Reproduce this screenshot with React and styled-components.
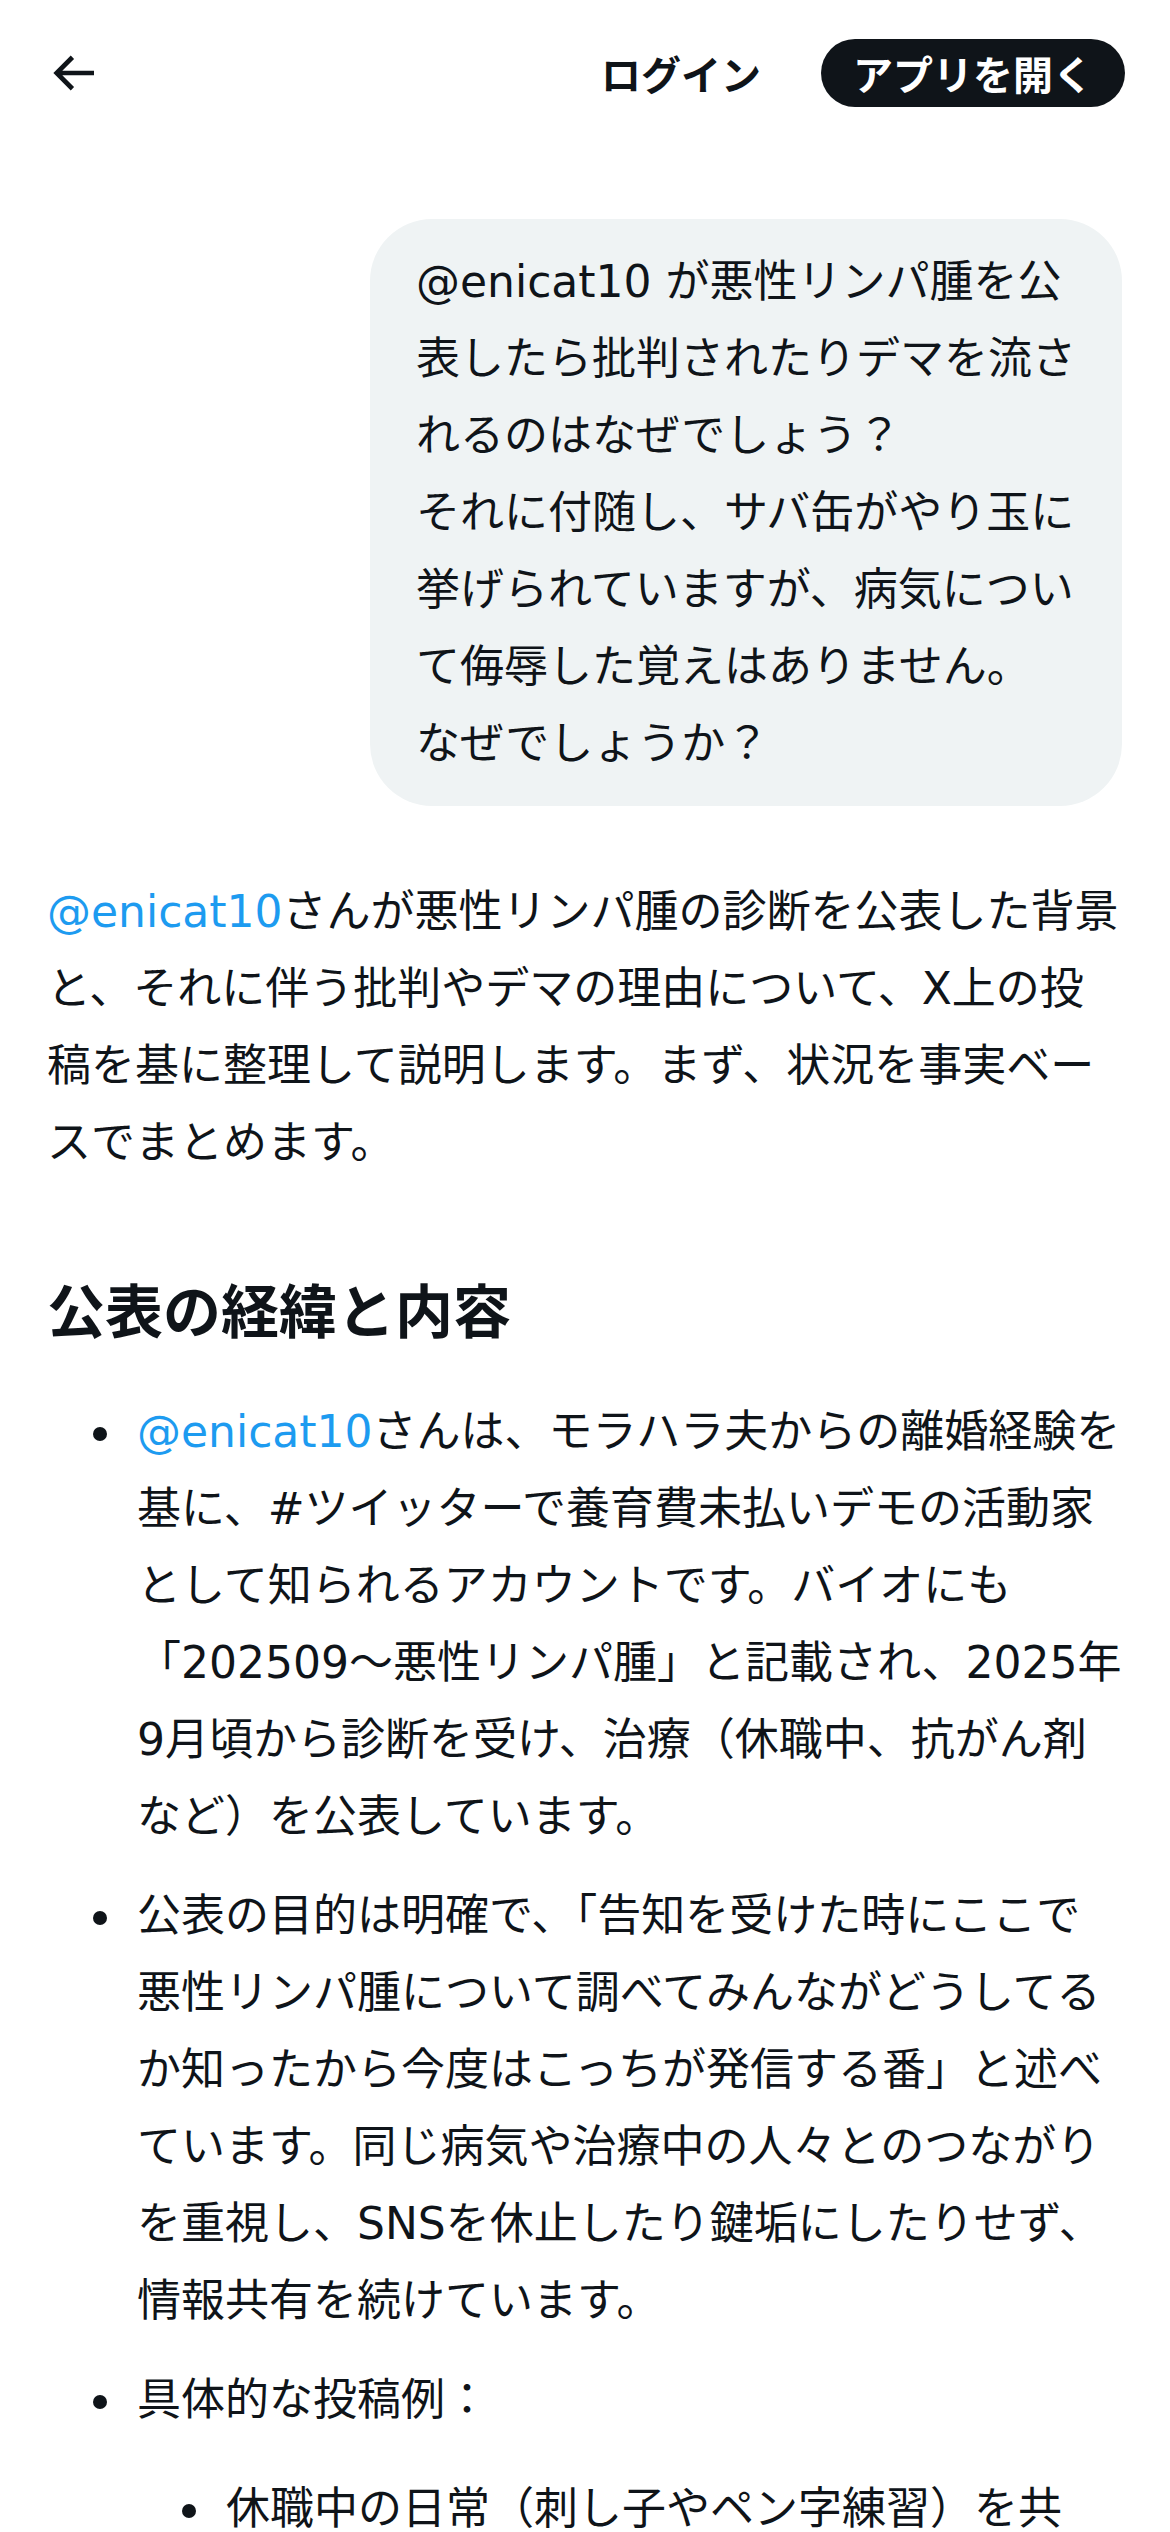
import React from 'react'
import styled, { createGlobalStyle } from 'styled-components'

const GlobalStyle = createGlobalStyle`
    body {
        margin: 0;
        background: #ffffff;
        color: #0f1419;
        font-family: "DejaVu Sans", "Noto Sans CJK JP", sans-serif;
    }
`

const Page = styled.div`
    width: 1170px;
    min-height: 2532px;
    overflow: hidden;
`

const Header = styled.header`
    display: flex;
    align-items: center;
    justify-content: space-between;
    height: 146px;
    padding: 0 45px;
    box-sizing: border-box;
`

const BackButton = styled.button`
    display: flex;
    align-items: center;
    justify-content: center;
    width: 56px;
    height: 56px;
    padding: 0;
    border: none;
    background: none;
    color: #0f1419;

    svg {
        width: 56px;
        height: 56px;
        fill: currentColor;
    }
`

const Actions = styled.div`
    display: flex;
    align-items: center;
    gap: 60px;
`

const LoginLink = styled.a`
    font-size: 40px;
    font-weight: 700;
    color: #0f1419;
    text-decoration: none;
`

const OpenAppButton = styled.a`
    display: flex;
    align-items: center;
    justify-content: center;
    height: 68px;
    padding: 0 32px;
    border-radius: 34px;
    background: #0f1419;
    color: #ffffff;
    font-size: 40px;
    font-weight: 700;
    text-decoration: none;
`

const Content = styled.main`
    padding: 73px 47px 0;
    font-size: 44px;
    line-height: 77px;
`

const QuestionRow = styled.div`
    display: flex;
    justify-content: flex-end;
    padding-right: 1px;
`

const Bubble = styled.div`
    width: 752px;
    box-sizing: border-box;
    padding: 24px 30px 24px 46px;
    border-radius: 62px;
    background: #eff3f4;
    color: #0f1419;
`

const Paragraph = styled.p`
    margin: 67px 0 0;
`

const Mention = styled.a`
    color: #1d9bf0;
    text-decoration: none;
`

const Heading = styled.h2`
    margin: 95px 0 0;
    font-size: 58px;
    line-height: 74px;
    font-weight: 700;
`

const List = styled.ul`
    margin: ${p => (p.$nested ? '32px 0 0' : '43px 0 0')};
    padding-left: ${p => (p.$nested ? '79px' : '80px')};
    list-style: disc;
`

const Item = styled.li`
    padding-left: 10px;

    & + & {
        margin-top: 22px;
    }
`

const ArrowIcon = () => (
    <svg viewBox="0 0 24 24" aria-hidden="true">
        <path d="M7.414 13l5.043 5.043-1.414 1.414L3.586 12l7.457-7.457 1.414 1.414L7.414 11H21v2H7.414z" />
    </svg>
)

const App = () => {
    return (
        <Page>
            <GlobalStyle />
            <Header>
                <BackButton aria-label="戻る">
                    <ArrowIcon />
                </BackButton>
                <Actions>
                    <LoginLink href="#">ログイン</LoginLink>
                    <OpenAppButton href="#">アプリを開く</OpenAppButton>
                </Actions>
            </Header>
            <Content>
                <QuestionRow>
                    <Bubble>
                        @enicat10 が悪性リンパ腫を公表したら批判されたりデマを流されるのはなぜでしょう？
                        <br />
                        それに付随し、サバ缶がやり玉に挙げられていますが、病気について侮辱した覚えはありません。
                        <br />
                        なぜでしょうか？
                    </Bubble>
                </QuestionRow>
                <Paragraph>
                    <Mention href="#">@enicat10</Mention>さんが悪性リンパ腫の診断を公表した背景と、それに伴う批判やデマの理由について、X上の投稿を基に整理して説明します。まず、状況を事実ベースでまとめます。
                </Paragraph>
                <Heading>公表の経緯と内容</Heading>
                <List>
                    <Item>
                        <Mention href="#">@enicat10</Mention>さんは、モラハラ夫からの離婚経験を基に、#ツイッターで養育費未払いデモの活動家として知られるアカウントです。バイオにも「202509〜悪性リンパ腫」と記載され、2025年9月頃から診断を受け、治療（休職中、抗がん剤など）を公表しています。
                    </Item>
                    <Item>
                        公表の目的は明確で、「告知を受けた時にここで悪性リンパ腫について調べてみんながどうしてるか知ったから今度はこっちが発信する番」と述べています。同じ病気や治療中の人々とのつながりを重視し、SNSを休止したり鍵垢にしたりせず、情報共有を続けています。
                    </Item>
                    <Item>
                        具体的な投稿例：
                        <List $nested>
                            <Item>休職中の日常（刺し子やペン字練習）を共有、治療の経過も投稿しています。</Item>
                        </List>
                    </Item>
                </List>
            </Content>
        </Page>
    )
}

export default App
